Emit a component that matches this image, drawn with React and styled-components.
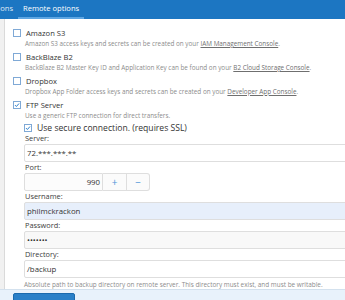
import React from 'react';
import styled, { createGlobalStyle } from 'styled-components';

const Global = createGlobalStyle`
    html, body {
        margin: 0;
        padding: 0;
        background: #ffffff;
        overflow: hidden;
    }
    body {
        font-family: "Open Sans", "Liberation Sans", sans-serif;
        color: #3a3a3a;
    }
`;

//=-=-=-=-=-=-=-=-=-=-=-= STYLES =-=-=-=-=-=-=-=-=-=-=-=
const Page = styled.div`
    width: 345px;
    height: 300px;
    display: flex;
    flex-direction: column;
    overflow: hidden;
`;

const TabBar = styled.div`
    height: 19px;
    flex: none;
    background: #1c76c2;
    display: flex;
    align-items: stretch;
    overflow: hidden;
`;

const Tab = styled.div`
    flex: none;
    padding: 0 5px;
    margin-left: ${p => p.$shift || 0}px;
    font-size: 7.6px;
    line-height: 17px;
    color: #ffffff;
    opacity: ${p => p.$active ? 1 : 0.85};
    border-bottom: 2px solid ${p => p.$active ? '#5fa6e2' : 'transparent'};
    white-space: nowrap;
`;

const Main = styled.div`
    flex: 1;
    display: flex;
    min-height: 0;
`;

const Gutter = styled.div`
    width: 4px;
    flex: none;
    background: #f1f1f1;
    border-right: 1px solid #dadada;
`;

const Panel = styled.div`
    flex: 1;
    padding: 8px 0 0 8px;
    display: flex;
    flex-direction: column;
`;

const Option = styled.div`
    margin-bottom: ${p => p.$last ? 2 : 3}px;
`;

const CheckRow = styled.label`
    display: flex;
    align-items: center;
    height: 12px;
    gap: 5px;
    font-size: ${p => p.$big ? 8.6 : 7.6}px;
    color: #333333;
    white-space: nowrap;
`;

const Box = styled.span`
    width: 6px;
    height: 6px;
    flex: none;
    border: 1px solid #7fa9d6;
    background: #ffffff;
    display: flex;
    align-items: center;
    justify-content: center;
`;

const Desc = styled.div`
    margin-left: 12px;
    font-size: 6.35px;
    line-height: 9px;
    color: #8c8c8c;
    white-space: nowrap;
`;

const Link = styled.a`
    color: #6f6f6f;
    text-decoration: underline;
`;

const Sub = styled.div`
    margin-left: 11px;
    display: flex;
    flex-direction: column;
`;

const Field = styled.div`
    display: flex;
    flex-direction: column;
    margin-bottom: 1px;
`;

const Label = styled.div`
    height: 10px;
    line-height: 9px;
    font-size: 7.4px;
    color: #3d3d3d;
    padding-left: 1px;
`;

const Input = styled.div`
    box-sizing: border-box;
    height: 18px;
    width: ${p => p.$width || 340}px;
    border: 1px solid #dedede;
    border-radius: 2px 0 0 2px;
    background: ${p => p.$bg || '#ffffff'};
    font-size: 7.8px;
    line-height: 16px;
    padding: 0 2px;
    color: #333333;
    text-align: ${p => p.$right ? 'right' : 'left'};
    white-space: nowrap;
`;

const Stepper = styled.div`
    display: flex;
`;

const StepButton = styled.div`
    box-sizing: border-box;
    width: ${p => p.$w}px;
    height: 18px;
    border: 1px solid #dedede;
    border-left: none;
    border-radius: ${p => p.$end ? '0 3px 3px 0' : '0'};
    background: #fbfbfb;
    color: #4d94d8;
    font-size: 10px;
    line-height: 16px;
    text-align: center;
`;

const Hint = styled.div`
    font-size: 6.4px;
    line-height: 9px;
    margin-top: 1px;
    color: #8c8c8c;
    white-space: nowrap;
`;

const Footer = styled.div`
    height: 7px;
    flex: none;
    background: #e8f2fb;
    border-top: 1px solid #d3e1ee;
    padding: 3px 0 0 13px;
`;

const SaveButton = styled.div`
    width: 62px;
    height: 10px;
    box-sizing: border-box;
    background: #2a80c8;
    border: 1px solid #1b6aad;
    border-radius: 2px;
`;

function Check({ checked }) {
    return (
        <Box>
            {checked && (
                <svg width="6" height="6" viewBox="0 0 6 6">
                    <path d="M1 3.1 L2.4 4.5 L5 1.5" fill="none" stroke="#2b7fce" strokeWidth="1" />
                </svg>
            )}
        </Box>
    );
}

const providers = [
    { name: 'Amazon S3', text: 'Amazon S3 access keys and secrets can be created on your ', link: 'IAM Management Console' },
    { name: 'BackBlaze B2', text: 'BackBlaze B2 Master Key ID and Application Key can be found on your ', link: 'B2 Cloud Storage Console' },
    { name: 'Dropbox', text: 'Dropbox App Folder access keys and secrets can be created on your ', link: 'Developer App Console' },
];

export default function App() {
    return (
        <Page>
            <Global />
            <TabBar>
                <Tab $shift={-20}>Options</Tab>
                <Tab $active>Remote options</Tab>
            </TabBar>

            <Main>
                <Gutter />
                <Panel>
                    {providers.map(p => (
                        <Option key={p.name}>
                            <CheckRow><Check />{p.name}</CheckRow>
                            <Desc>{p.text}<Link>{p.link}</Link>.</Desc>
                        </Option>
                    ))}

                    <Option $last>
                        <CheckRow><Check checked />FTP Server</CheckRow>
                        <Desc>Use a generic FTP connection for direct transfers.</Desc>
                    </Option>

                    <Sub>
                        <CheckRow $big><Check checked />Use secure connection. (requires SSL)</CheckRow>

                        <Field>
                            <Label>Server:</Label>
                            <Input>72.***.***.**</Input>
                        </Field>

                        <Field>
                            <Label>Port:</Label>
                            <Stepper>
                                <Input $width={79} $right $bg="#fcfcfc">990</Input>
                                <StepButton $w={24}>+</StepButton>
                                <StepButton $w={23} $end>−</StepButton>
                            </Stepper>
                        </Field>

                        <Field>
                            <Label>Username:</Label>
                            <Input $bg="#e7effb">philmckrackon</Input>
                        </Field>

                        <Field>
                            <Label>Password:</Label>
                            <Input $bg="#f8f8f8">•••••••</Input>
                        </Field>

                        <Field>
                            <Label>Directory:</Label>
                            <Input>/backup</Input>
                        </Field>

                        <Hint>Absolute path to backup directory on remote server. This directory must exist, and must be writable.</Hint>
                    </Sub>
                </Panel>
            </Main>

            <Footer>
                <SaveButton />
            </Footer>
        </Page>
    );
}
